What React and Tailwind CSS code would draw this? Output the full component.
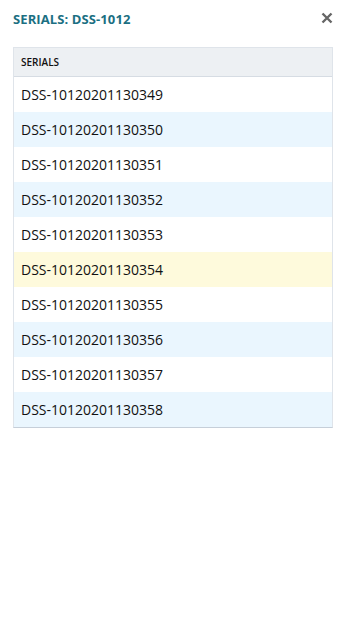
import React from "react";

const serials = [
  "DSS-10120201130349",
  "DSS-10120201130350",
  "DSS-10120201130351",
  "DSS-10120201130352",
  "DSS-10120201130353",
  "DSS-10120201130354",
  "DSS-10120201130355",
  "DSS-10120201130356",
  "DSS-10120201130357",
  "DSS-10120201130358",
];

export default function App() {
  return (
    <div className="w-[345px] h-[620px] bg-white" style={{ fontFamily: '"Open Sans", sans-serif' }}>
      <div className="flex items-center justify-between pl-[13px] pr-[12px] pt-[6px] h-[33px]">
        <div className="text-[13px] font-bold text-[#1b6f82] tracking-[0.1px]">
          SERIALS: DSS-1012
        </div>
        <svg width="12" height="12" viewBox="0 0 12 12" className="mt-[-3px]">
          <path d="M1.5 1.5 L10.5 10.5 M10.5 1.5 L1.5 10.5" stroke="#666" strokeWidth="2.4" strokeLinecap="butt" />
        </svg>
      </div>
      <div className="mx-[13px] mt-[14px] w-[320px] border border-[#dfe4ea] border-b-[#c6cfd9]">
        <div className="h-[29px] bg-[#edf0f3] border-b border-[#d6dce3] flex items-center pl-[7px] text-[10px] font-semibold text-[#111]">
          SERIALS
        </div>
        {serials.map((s, i) => {
          const bg = i === 5 ? "bg-[#fefadc]" : i % 2 === 1 ? "bg-[#eaf6fe]" : "bg-white";
          return (
            <div key={s} className={`h-[35px] flex items-center pl-[7px] text-[14px] text-[#111] ${bg}`}>
              {s}
            </div>
          );
        })}
      </div>
    </div>
  );
}
